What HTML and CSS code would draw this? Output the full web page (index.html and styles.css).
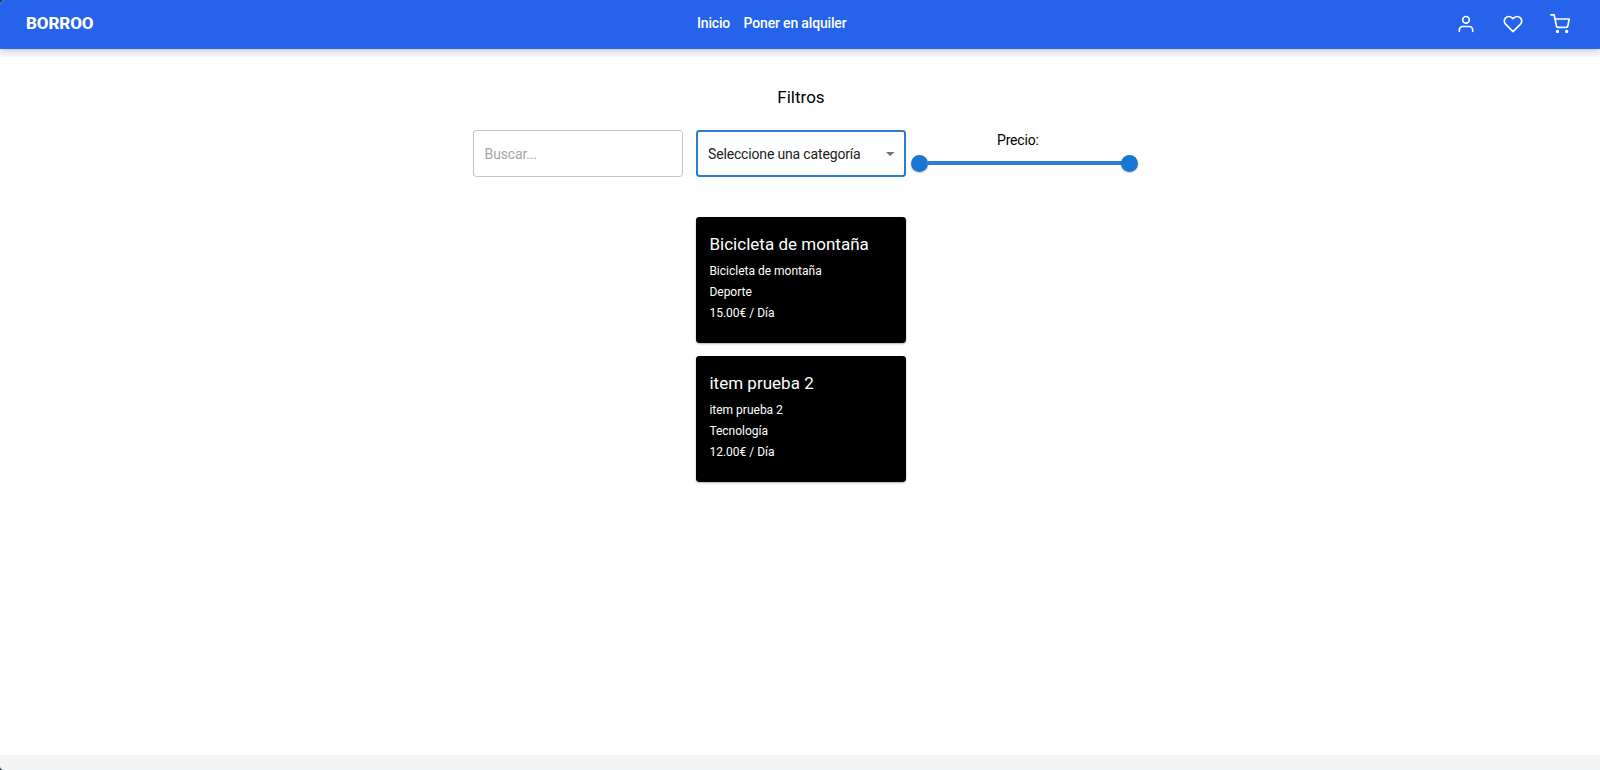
FILE: index.html
```html
<!DOCTYPE html>
<html lang="es">
<head>
<meta charset="utf-8">
<title>Borroo</title>
<link rel="stylesheet" href="styles.css">
</head>
<body>
<header class="navbar">
  <a class="brand">BORROO</a>
  <nav class="links"><a>Inicio</a><a>Poner en alquiler</a></nav>
  <div class="actions">
    <svg class="icon" viewBox="0 0 24 24"><path d="M20 21v-2a4 4 0 0 0-4-4H8a4 4 0 0 0-4 4v2"/><circle cx="12" cy="7" r="4"/></svg>
    <svg class="icon" viewBox="0 0 24 24"><path d="M20.840 4.610a5.500 5.500 0 0 0-7.780 0L12 5.670l-1.060-1.060a5.500 5.500 0 0 0-7.780 7.780l1.060 1.060L12 21.230l7.780-7.780 1.060-1.060a5.500 5.500 0 0 0 0-7.780z"/></svg>
    <svg class="icon" viewBox="0 0 24 24"><circle class="wheel" cx="9" cy="21" r="1"/><circle class="wheel" cx="20" cy="21" r="1"/><path d="M1 1h4l2.680 13.390a2 2 0 0 0 2 1.610h9.720a2 2 0 0 0 2-1.610L23 6H6"/></svg>
  </div>
</header>
<main class="page">
  <h1 class="heading">Filtros</h1>
  <section class="filters">
    <div class="field"><span class="placeholder">Buscar...</span></div>
    <div class="field field-focused"><span>Seleccione una categoría</span><svg class="caret" viewBox="0 0 10 5"><path d="M0 0h10L5 5z"/></svg></div>
    <div class="price">
      <span class="price-label">Precio:</span>
      <div class="slider"><i class="thumb"></i><i class="track"></i><i class="thumb"></i></div>
    </div>
  </section>
  <section class="items">
    <article class="card">
      <h2 class="card-title">Bicicleta de montaña</h2>
      <p class="card-text">Bicicleta de montaña</p>
      <p class="card-text">Deporte</p>
      <p class="card-text">15.00€ / Día</p>
    </article>
    <article class="card">
      <h2 class="card-title">item prueba 2</h2>
      <p class="card-text">item prueba 2</p>
      <p class="card-text">Tecnología</p>
      <p class="card-text">12.00€ / Día</p>
    </article>
  </section>
</main>
</body>
</html>
```
FILE: styles.css
```css
* { box-sizing: border-box; margin: 0; }
html { background: #1f3044; }
body {
  height: 770px;
  overflow: hidden;
  display: flex;
  flex-direction: column;
  background: #f3f4f6;
  border-radius: 5px 0 0 4px;
  font-family: Roboto, sans-serif;
  font-size: 14px;
  letter-spacing: -.16px;
  color: #000;
}
.navbar {
  height: 49px;
  flex: none;
  display: flex;
  justify-content: space-between;
  align-items: center;
  padding: 0 27px 3px 26px;
  background: #2563eb;
  color: #fff;
  box-shadow: 0 3px 5px -1px rgba(0, 0, 0, .14), 0 2px 3px -2px rgba(0, 0, 0, .1);
}
.brand { font-size: 17px; font-weight: 800; line-height: 24px; letter-spacing: -.1px; }
.links { display: flex; gap: 13.4px; font-weight: 500; margin: 0 6px 0 0; }
.actions { display: flex; gap: 27px; padding: 1px 3px 0 0; }
.icon {
  width: 20px;
  height: 20px;
  fill: none;
  stroke: #fff;
  stroke-width: 2;
  stroke-linecap: round;
  stroke-linejoin: round;
}
.wheel { fill: #fff; }
.page {
  height: 698px;
  margin-top: 8px;
  display: flex;
  flex-direction: column;
  align-items: center;
  padding: 28px 0 0 2px;
  background: #fff;
}
.heading { font-size: 17px; font-weight: 400; line-height: 25px; letter-spacing: 0; }
.filters {
  display: grid;
  grid-template-columns: repeat(3, 210px);
  gap: 13.4px;
  margin-top: 20px;
}
.field {
  height: 47px;
  display: flex;
  align-items: center;
  justify-content: space-between;
  padding: 1px 11px 0;
  border: 1px solid #c4c4c4;
  border-radius: 3.4px;
  color: #212121;
}
.placeholder { color: #a6a6a6; }
.field-focused { padding: 0 10px; border: 2px solid #2b7bd0; }
.caret { width: 8.4px; height: 4.2px; margin-top: 1px; fill: #757575; }
.price { display: flex; flex-direction: column; align-items: center; }
.price-label { line-height: 20px; margin-right: 13px; }
.slider {
  width: 227px;
  height: 17px;
  margin-top: 4.5px;
  display: flex;
  align-items: center;
}
.thumb {
  width: 17px;
  height: 17px;
  flex: none;
  border-radius: 50%;
  background: #1976d2;
  box-shadow: 0 1px 2px rgba(0, 0, 0, .25);
}
.track { height: 4px; flex: 1; margin: 0 -2px; background: #2d7dd2; }
.items { width: 210px; margin-top: 40.4px; display: grid; gap: 13px; }
.card {
  height: 125.6px;
  padding: 16px 13.4px;
  border-radius: 3.4px;
  background: #000;
  color: #fff;
  box-shadow: 0 1px 2px rgba(0, 0, 0, .3);
}
.card-title {
  font-size: 17px;
  font-weight: 400;
  line-height: 22px;
  letter-spacing: .02px;
  margin-bottom: 6px;
}
.card-text { font-size: 12px; line-height: 21px; letter-spacing: 0; }
```
